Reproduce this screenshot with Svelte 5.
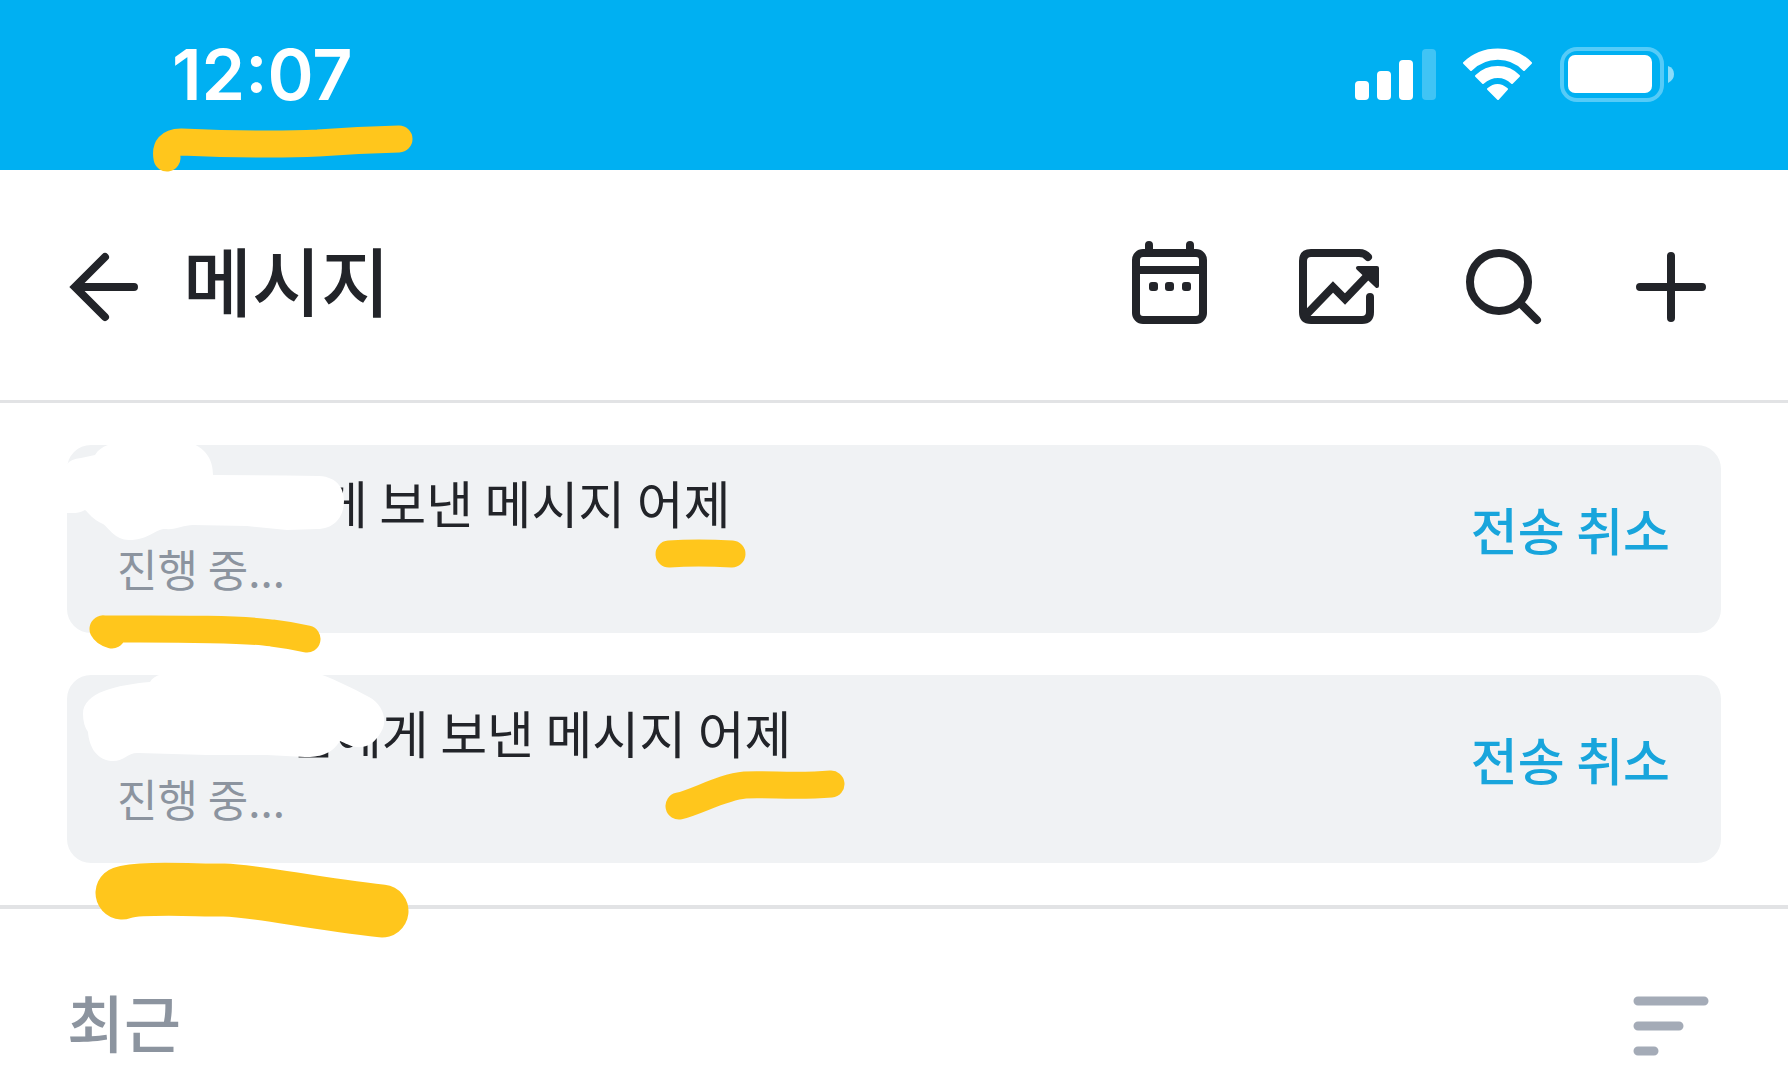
<script>
  const messages = [
    {
      id: 1,
      visible: '에게 보낸 메시지 어제',
      nameWidth: 157,
      mask: 'M0 19 Q4 14 14 13 L28 10 C34 0 46 -2 54 -2 H124 C140 4 146 16 146 30 Q200 30 252 31 C271 32 277 44 277 56 C277 70 269 84 250 84 L220 85 L180 81 L126 80 C116 80 110 85 98 84 C88 84 82 95 62 95 C48 95 42 83 36 79 C26 75 22 68 18 65 C12 69 4 68 0 68 Z',
      notes: [
        'M36 184 Q38 188 45 190 M36 184 C90 184 170 183 205 188 Q222 190 240 194',
        'M602 109 Q630 107 665 109'
      ]
    },
    {
      id: 2,
      visible: '님에게 보낸 메시지 어제',
      nameWidth: 171,
      mask: 'M16 39 C16 17 50 10 83 7 C87 0 98 -3 110 -3 H245 C262 1 285 13 302 22 C314 28 320 42 316 53 C311 64 304 71 295 72 C286 73 280 69 273 66 C264 80 252 82 238 82 L200 80 L140 80 L72 78 C60 77 58 87 44 86 C28 84 22 70 21 57 Q16 50 16 39 Z',
      notes: ['M612 131 C630 127 655 112 678 110 C705 109 730 112 764 109']
    }
  ];
</script>

<div class="screen">
  <div class="status">
    <time class="clock">12:07
      <svg class="clock-note" viewBox="0 0 270 60" aria-hidden="true">
        <path d="M19 37 Q16 21 33 21 C80 23 130 24 170 22 Q210 19 251 18" class="pen" />
      </svg>
    </time>
    <div class="indicators">
      <svg width="82" height="56" viewBox="0 0 82 56" role="img" aria-label="Signal">
        <g fill="#fff">
          <rect x="1" y="34" width="14" height="19" rx="4" />
          <rect x="23" y="24" width="14" height="29" rx="4" />
          <rect x="45" y="13" width="14" height="40" rx="4" />
          <rect x="68" y="2" width="14" height="51" rx="4" opacity="0.25" />
        </g>
      </svg>
      <svg width="72" height="56" viewBox="0 0 72 56" role="img" aria-label="Wi-Fi">
        <g fill="#fff" stroke="#fff" stroke-width="2" stroke-linejoin="round">
          <path d="M2 16 C20 -2 52 -2 69 16 L62 23 C48 8 24 8 9 23 Z" />
          <path d="M14 29 C26 17 46 17 57 29 L50 36 C42 28 30 28 21 36 Z" />
          <path d="M26 42 C32 37 39 37 45 42 L36 52 Z" />
        </g>
      </svg>
      <svg width="116" height="56" viewBox="0 0 116 56" role="img" aria-label="Battery">
        <rect x="2" y="2" width="100" height="51" rx="15" fill="none" stroke="#55cbf8" stroke-width="4" />
        <rect x="8" y="8" width="84" height="38" rx="7" fill="#fff" />
        <path d="M108 19 Q114 21 114 27 Q114 33 108 36 Z" fill="#8bdcfa" />
      </svg>
    </div>
  </div>

  <header class="bar">
    <button class="icon back" aria-label="뒤로">
      <svg width="84" height="84" viewBox="0 0 84 84">
        <path d="M48 14 L18 44 L48 74 M20 44 H77" stroke-linejoin="miter" />
      </svg>
    </button>
    <h1>메시지</h1>
    <div class="actions">
      <button class="icon" aria-label="일정">
        <svg width="84" height="84" viewBox="0 0 84 84">
          <rect x="8" y="10" width="67" height="67" rx="7" />
          <path d="M21 8 V2 M62 8 V2 M8 27 H75" />
          <g fill="#222429" stroke="none">
            <rect x="21" y="39" width="9" height="9" rx="3" />
            <rect x="37" y="39" width="9" height="9" rx="3" />
            <rect x="54" y="39" width="9" height="9" rx="3" />
          </g>
        </svg>
      </button>
      <button class="icon" aria-label="통계">
        <svg width="84" height="84" viewBox="0 0 84 84">
          <path d="M73 14 Q70 10 64 10 H16 Q8 10 8 18 V69 Q8 77 16 77 H67 Q75 77 75 69 V54" />
          <path d="M10 73 L38 44 L50 56 L74 31" stroke-linejoin="miter" />
          <path d="M63 25 H82 V43 Z" fill="#222429" stroke-width="4" stroke-linejoin="round" />
        </svg>
      </button>
      <button class="icon" aria-label="검색">
        <svg width="84" height="84" viewBox="0 0 84 84">
          <circle cx="37" cy="39" r="29" />
          <path d="M59 61 L75 77" />
        </svg>
      </button>
      <button class="icon" aria-label="추가">
        <svg width="84" height="84" viewBox="0 0 84 84">
          <path d="M42 13 V75 M11 44 H73" />
        </svg>
      </button>
    </div>
  </header>

  <main>
    <ul class="queue">
      {#each messages as m (m.id)}
        <li class="card">
          <div class="copy">
            <p class="line"><span class="name" style="width: {m.nameWidth}px"></span>{m.visible}</p>
            <p class="state">진행 중...</p>
          </div>
          <button class="cancel">전송 취소</button>
          <svg class="marks" width="800" height="240" viewBox="0 0 800 240" aria-hidden="true">
            <path d={m.mask} fill="#fff" />
            {#each m.notes as d}
              <path {d} class="pen" />
            {/each}
          </svg>
        </li>
      {/each}
    </ul>
    <section class="recent">
      <svg class="divider-note" width="340" height="100" viewBox="0 0 340 100" aria-hidden="true">
        <path d="M28 38 C45 32 95 35 130 35 C165 36 215 48 288 56" class="pen wide" />
      </svg>
      <h2>최근</h2>
      <button class="sort" aria-label="정렬">
        <svg width="76" height="60" viewBox="0 0 76 60">
          <path d="M5 5 H71 M5 30 H46 M5 55 H21" />
        </svg>
      </button>
    </section>
  </main>
</div>

<style>
  :global(body) {
    background: #fff;
    overflow-x: hidden;
  }
  .screen {
    font-family: 'Noto Sans CJK KR', sans-serif;
    color: #222429;
    background: #fff;
    min-height: 100vh;
    overflow: hidden;
    box-sizing: border-box;
  }
  h1, h2, p, ul {
    margin: 0;
    padding: 0;
  }
  button {
    border: 0;
    padding: 0;
    background: none;
    font-family: inherit;
    cursor: pointer;
  }
  svg {
    display: block;
    overflow: visible;
  }
  .pen {
    fill: none;
    stroke: #ffc61c;
    stroke-width: 27px;
    stroke-linecap: round;
    stroke-linejoin: round;
  }
  .wide {
    stroke-width: 53px;
  }
  .status {
    display: flex;
    align-items: center;
    justify-content: space-between;
    height: 150px;
    padding: 0 112px 20px 172px;
    background: #00b0f2;
  }
  .clock {
    position: relative;
    z-index: 1;
    font-family: Inter, sans-serif;
    font-size: 70px;
    font-weight: 600;
    line-height: 84px;
    color: #fff;
  }
  .clock-note {
    position: absolute;
    left: -24px;
    top: 88px;
    width: 270px;
    height: 60px;
  }
  .indicators {
    display: flex;
    gap: 26px;
  }
  .bar {
    display: flex;
    align-items: center;
    height: 230px;
    padding: 0 75px 0 57px;
    border-bottom: 3px solid #e2e3e5;
  }
  .icon svg {
    fill: none;
    stroke: #222429;
    stroke-width: 8px;
    stroke-linecap: round;
  }
  h1 {
    margin-left: 42px;
    padding-bottom: 12px;
    font-size: 75px;
    font-weight: 500;
    line-height: 110px;
  }
  .actions {
    display: flex;
    gap: 83px;
    margin-left: auto;
  }
  .queue {
    display: flex;
    flex-direction: column;
    gap: 42px;
    padding: 42px 67px;
    list-style: none;
  }
  .card {
    position: relative;
    display: flex;
    align-items: center;
    justify-content: space-between;
    height: 188px;
    padding: 0 51px 10px 50px;
    border-radius: 24px;
    background: #f0f2f4;
    box-sizing: border-box;
  }
  .line {
    font-size: 51px;
    line-height: 68px;
    white-space: nowrap;
  }
  .name {
    display: inline-block;
  }
  .state {
    font-size: 44px;
    line-height: 64px;
    color: #8c949f;
  }
  .cancel {
    padding-bottom: 10px;
    font-size: 51px;
    font-weight: 500;
    line-height: 72px;
    color: #18a5dc;
  }
  .marks {
    position: absolute;
    left: 0;
    top: 0;
    pointer-events: none;
  }
  .recent {
    position: relative;
    display: flex;
    align-items: center;
    justify-content: space-between;
    padding: 72px 79px 0 67px;
    border-top: 4px solid #e2e3e5;
  }
  .divider-note {
    position: absolute;
    left: 94px;
    top: -54px;
  }
  h2 {
    padding-bottom: 10px;
    font-size: 62px;
    font-weight: 500;
    line-height: 80px;
    color: #8c949f;
  }
  .sort svg {
    fill: none;
    stroke: #a4abb7;
    stroke-width: 9px;
    stroke-linecap: round;
  }
</style>
